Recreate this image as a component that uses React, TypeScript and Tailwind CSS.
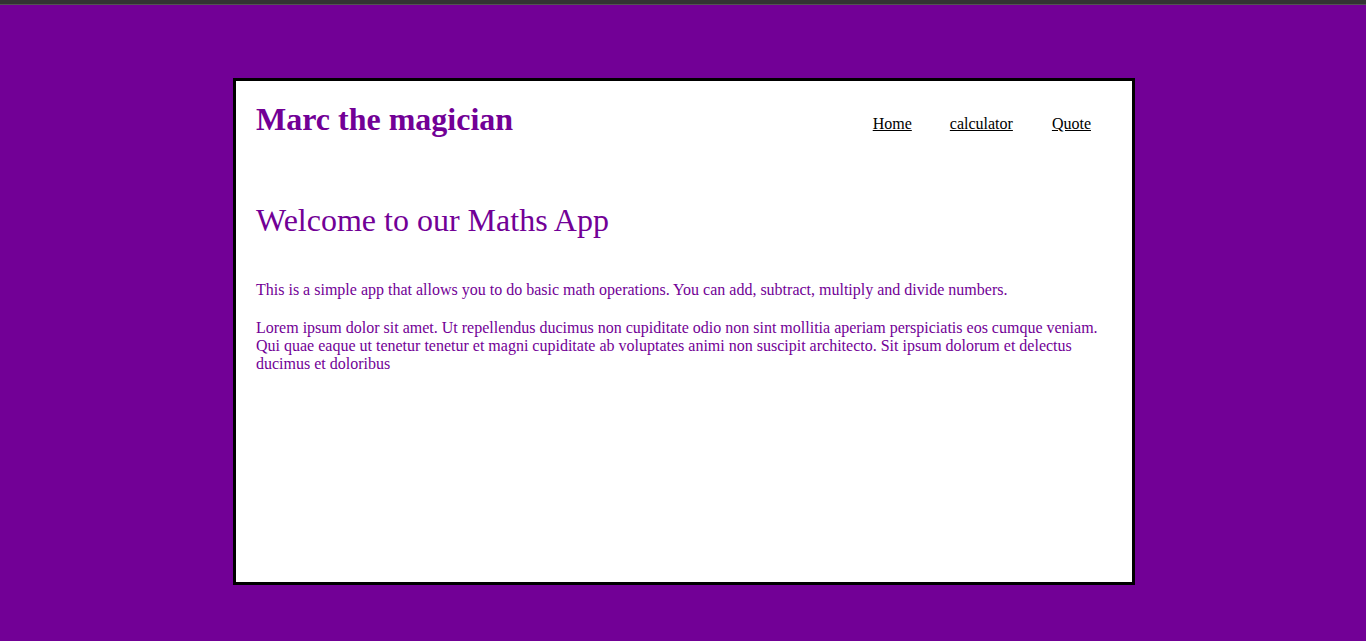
export default function App() {
  const serif = { fontFamily: '"Liberation Serif", "Times New Roman", serif' };
  return (
    <div className="min-h-[641px] h-[641px] bg-[#720096] flex flex-col" style={serif}>
      <div className="h-[4px] bg-[#333333]" />
      <div className="h-px bg-[#525252]" />
      <div className="flex pt-[73px] pl-[233px]">
        <div className="w-[902px] h-[507px] border-[3px] border-black bg-white px-[20px] text-[#720096]">
          <div className="flex justify-between items-start">
            <h1 className="mt-[20px] text-[32px] font-bold leading-[37px]">Marc the magician</h1>
            <nav className="mt-[34px] flex pr-[21px] text-[16px] leading-[18px] text-black">
              <a href="#" className="underline">Home</a>
              <a href="#" className="underline ml-[38px]">calculator</a>
              <a href="#" className="underline ml-[39px]">Quote</a>
            </nav>
          </div>
          <h2 className="mt-[64px] text-[32px] font-normal leading-[37px]">Welcome to our Maths App</h2>
          <p className="mt-[42px] text-[16px] leading-[18px]">
            This is a simple app that allows you to do basic math operations. You can add, subtract, multiply and divide numbers.
          </p>
          <p className="mt-[20px] text-[16px] leading-[18px]">
            Lorem ipsum dolor sit amet. Ut repellendus ducimus non cupiditate odio non sint mollitia aperiam perspiciatis eos cumque veniam. Qui quae eaque ut tenetur tenetur et magni cupiditate ab voluptates animi non suscipit architecto. Sit ipsum dolorum et delectus ducimus et doloribus
          </p>
        </div>
      </div>
    </div>
  );
}
